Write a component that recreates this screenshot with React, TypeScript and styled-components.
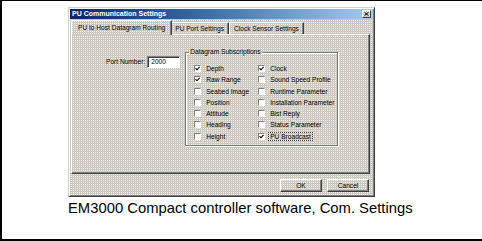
import styled, { createGlobalStyle, css } from 'styled-components'

const GlobalStyle = createGlobalStyle`
  html, body {
    margin: 0;
    padding: 0;
    background: #fff;
  }
  body {
    width: 482px;
    height: 241px;
    overflow: hidden;
  }
`

const dither = css`
  background-color: #f0efeb;
  background-image: linear-gradient(90deg, transparent 1px, #ccc8c0 1px),
    linear-gradient(transparent 1px, #ccc8c0 1px);
  background-size: 2px 2px;
`

const uiFont = css`
  font-family: 'Liberation Sans', Arial, sans-serif;
  font-size: 6.6px;
  line-height: 8px;
  color: #000;
`

const Page = styled.div`
  box-sizing: border-box;
  width: 482px;
  height: 241px;
  border-top: 1px solid #000;
  border-left: 2px solid #000;
  border-bottom: 2px solid #000;
  padding: 6px 0 0 66px;
  display: flex;
  flex-direction: column;
`

const Dialog = styled.div`
  ${dither};
  box-sizing: border-box;
  width: 307px;
  height: 190px;
  border: 1px solid;
  border-color: #d4d0c8 #404040 #404040 #d4d0c8;
  box-shadow: inset 1px 1px #fff, inset -1px -1px #808080;
  padding: 1px;
  display: flex;
  flex-direction: column;
`

const TitleBar = styled.div`
  height: 10px;
  display: flex;
  align-items: center;
  justify-content: space-between;
  padding: 0 2px 0 2px;
  background: linear-gradient(90deg, #0a246a 0%, #3a6ea5 45%, #a6caf0 100%);
  color: #fff;
  font: bold 7px/10px 'Liberation Sans', Arial, sans-serif;
  white-space: nowrap;
`

const CloseButton = styled.div`
  ${dither};
  box-sizing: border-box;
  width: 9px;
  height: 8px;
  border: 1px solid;
  border-color: #fff #404040 #404040 #fff;
  display: flex;
  align-items: center;
  justify-content: center;
`

const Body = styled.div`
  padding: 1px 0 0 1px;
  display: flex;
  flex-direction: column;
`

const TabStrip = styled.div`
  display: flex;
  align-items: flex-end;
  height: 14px;
  padding-left: 2px;
  position: relative;
  z-index: 1;
`

const Tab = styled.div<{ $active?: boolean }>`
  ${uiFont};
  box-sizing: border-box;
  height: 12px;
  padding: 2px 4px 0;
  white-space: nowrap;
  border-top: 1px solid #fff;
  border-left: 1px solid #fff;
  border-right: 1px solid #404040;
  box-shadow: inset -1px 0 #808080;
  ${(p) =>
    p.$active &&
    css`
      ${dither};
      height: 15px;
      margin: 0 -2px -1px;
      padding: 3px 6px 0;
      position: relative;
      z-index: 2;
    `}
`

const Panel = styled.div`
  box-sizing: border-box;
  width: 299px;
  height: 140px;
  border: 1px solid;
  border-color: #fff #404040 #404040 #fff;
  box-shadow: inset -1px -1px #808080;
  display: flex;
  align-items: flex-start;
  padding-left: 34px;
`

const PortRow = styled.div`
  ${uiFont};
  margin-top: 21px;
  display: flex;
  align-items: center;
  gap: 2px;
  white-space: nowrap;
`

const TextBox = styled.div`
  ${uiFont};
  box-sizing: border-box;
  width: 33px;
  height: 12px;
  background: #fff;
  border: 1px solid;
  border-color: #808080 #fff #fff #808080;
  box-shadow: inset 1px 1px #404040;
  padding: 1px 0 0 3px;
`

const GroupBox = styled.div`
  position: relative;
  box-sizing: border-box;
  width: 153px;
  height: 94px;
  margin: 17px 0 0 5px;
  border: 1px solid #808080;
  box-shadow: inset 1px 1px #fff, 1px 1px #fff;
  padding: 10px 0 0 8px;
`

const Legend = styled.span`
  ${uiFont};
  ${dither};
  position: absolute;
  top: -5px;
  left: 3px;
  padding: 0 1px;
  white-space: nowrap;
`

const CheckGrid = styled.div`
  display: grid;
  grid-template-columns: 64px 1fr;
  grid-auto-flow: column;
  grid-template-rows: repeat(7, 11.25px);
`

const CheckItem = styled.div`
  ${uiFont};
  display: flex;
  align-items: center;
  gap: 3px;
  white-space: nowrap;
`

const Box = styled.span`
  box-sizing: border-box;
  width: 7px;
  height: 7px;
  flex: none;
  background: #fff;
  border: 1px solid;
  border-color: #808080 #fff #fff #808080;
  display: flex;
  align-items: center;
  justify-content: center;
`

const ItemLabel = styled.span<{ $focused?: boolean }>`
  box-sizing: border-box;
  padding: 0 1px;
  border: 1px solid transparent;
  line-height: 7px;
  ${(p) =>
    p.$focused &&
    css`
      border: 1px dotted #404040;
    `}
`

const Footer = styled.div`
  display: flex;
  justify-content: flex-end;
  gap: 5px;
  width: 299px;
  margin-top: 5px;
  padding-right: 1px;
  box-sizing: border-box;
`

const Button = styled.div`
  ${uiFont};
  box-sizing: border-box;
  width: 42px;
  height: 13px;
  border: 1px solid;
  border-color: #fff #404040 #404040 #fff;
  box-shadow: inset -1px -1px #808080;
  display: flex;
  align-items: center;
  justify-content: center;
`

const Caption = styled.div`
  font-family: 'Liberation Sans', Arial, sans-serif;
  font-size: 14.8px;
  line-height: 17px;
  margin-top: 3px;
  color: #000;
  white-space: nowrap;
`

const subscriptions = [
  { label: 'Depth', checked: true },
  { label: 'Raw Range', checked: true },
  { label: 'Seabed Image' },
  { label: 'Position' },
  { label: 'Attitude' },
  { label: 'Heading' },
  { label: 'Height' },
  { label: 'Clock', checked: true },
  { label: 'Sound Speed Profile' },
  { label: 'Runtime Parameter' },
  { label: 'Installation Parameter' },
  { label: 'Bist Reply' },
  { label: 'Status Parameter' },
  { label: 'PU Broadcast', checked: true, focused: true },
]

const Check = () => (
  <svg width="5" height="5" viewBox="0 0 5 5">
    <path d="M0.5 2.2 L2 3.8 L4.6 0.8" stroke="#000" strokeWidth="1.1" fill="none" />
  </svg>
)

export default function App() {
  return (
    <>
      <GlobalStyle />
      <Page>
        <Dialog>
          <TitleBar>
            PU Communication Settings
            <CloseButton>
              <svg width="5" height="4" viewBox="0 0 5 4">
                <path d="M0.5 0.3 L4.5 3.7 M4.5 0.3 L0.5 3.7" stroke="#000" strokeWidth="1" />
              </svg>
            </CloseButton>
          </TitleBar>
          <Body>
            <TabStrip>
              <Tab $active>PU to Host Datagram Routing</Tab>
              <Tab>PU Port Settings</Tab>
              <Tab>Clock Sensor Settings</Tab>
            </TabStrip>
            <Panel>
              <PortRow>
                Port Number:
                <TextBox>2000</TextBox>
              </PortRow>
              <GroupBox>
                <Legend>Datagram Subscriptions</Legend>
                <CheckGrid>
                  {subscriptions.map((s) => (
                    <CheckItem key={s.label}>
                      <Box>{s.checked && <Check />}</Box>
                      <ItemLabel $focused={s.focused}>{s.label}</ItemLabel>
                    </CheckItem>
                  ))}
                </CheckGrid>
              </GroupBox>
            </Panel>
            <Footer>
              <Button>OK</Button>
              <Button>Cancel</Button>
            </Footer>
          </Body>
        </Dialog>
        <Caption>EM3000 Compact controller software, Com. Settings</Caption>
      </Page>
    </>
  )
}
